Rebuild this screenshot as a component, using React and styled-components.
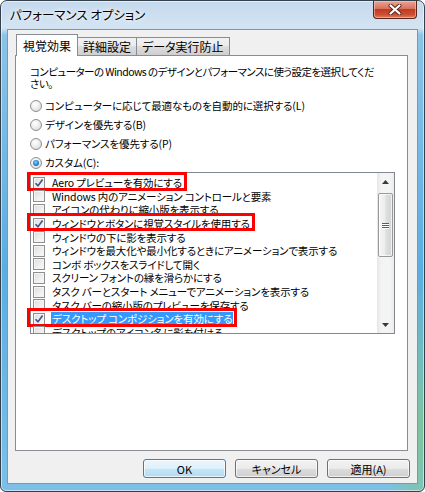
import React from 'react';
import styled, { createGlobalStyle } from 'styled-components';

const FONT = "'Noto Sans CJK JP', 'Noto Sans', sans-serif";

const GlobalStyle = createGlobalStyle`
  html, body {
    margin: 0;
    padding: 0;
    background: #ffffff;
  }
  body {
    font-family: ${FONT};
    font-feature-settings: 'palt';
    color: #000000;
  }
`;

const Window = styled.div`
  box-sizing: border-box;
  width: 425px;
  height: 492px;
  display: flex;
  flex-direction: column;
  padding: 0 6px 7px 6px;
  border: 1px solid #34404c;
  border-radius: 7px 7px 6px 6px;
  overflow: hidden;
  background:
    radial-gradient(ellipse 40px 160px at 100% 88%, rgba(130, 200, 120, 0.7), transparent),
    linear-gradient(to bottom, #c4d9ed 0, #d4e4f2 27px, #8cc3e8 34px, #5aaee2 55%, #7cc0e8 100%);
  box-shadow: inset 0 0 0 1px rgba(255, 255, 255, 0.55);
`;

const TitleBar = styled.div`
  height: 28px;
  display: flex;
  align-items: flex-start;
  justify-content: space-between;
  padding-left: 3px;
`;

const Title = styled.div`
  line-height: 28px;
  font-size: 12.5px;
  text-shadow: 0 0 6px #ffffff, 0 0 3px #ffffff;
`;

const CloseButton = styled.div`
  width: 44px;
  height: 18px;
  margin-right: 1px;
  display: flex;
  align-items: center;
  justify-content: center;
  box-sizing: border-box;
  border: 1px solid #5a2419;
  border-top: none;
  border-radius: 0 0 4px 4px;
  background: linear-gradient(to bottom, #eaa596 0, #d9715c 45%, #c23a22 50%, #cc4f34 80%, #de8262 100%);
  box-shadow: inset 0 0 0 1px rgba(255, 210, 200, 0.5);
`;

const Client = styled.div`
  flex: 1;
  display: flex;
  flex-direction: column;
  padding: 4px 9px 5px 7px;
  border: 1px solid #8196ab;
  background: #f0f0f0;
`;

const TabStrip = styled.div`
  height: 21px;
  display: flex;
  align-items: flex-end;
  padding-left: 1px;
`;

const Tab = styled.div`
  box-sizing: border-box;
  height: ${(p) => (p.$active ? '22px' : '18px')};
  margin-bottom: ${(p) => (p.$active ? '-1px' : '0')};
  margin-left: ${(p) => (p.$active ? '0' : '-1px')};
  position: relative;
  z-index: ${(p) => (p.$active ? 1 : 0)};
  padding: 0 ${(p) => (p.$active ? '6px' : '5px')};
  display: flex;
  align-items: center;
  font-size: 12px;
  border: 1px solid #898c95;
  border-bottom: none;
  background: ${(p) => (p.$active ? '#ffffff' : 'linear-gradient(to bottom, #f2f2f2, #ebebeb 50%, #dddddd 50%, #cfcfcf)')};
`;

const Panel = styled.div`
  flex: 1;
  background: #ffffff;
  border: 1px solid #898c95;
  padding: 10px 0 0 14px;
`;

const Description = styled.div`
  font-size: 10.5px;
  letter-spacing: -0.55px;
  line-height: 12px;
`;

const DescLine = styled.div`
  height: 12px;
  white-space: nowrap;
`;

const RadioGroup = styled.div`
  margin-top: 6px;
  display: flex;
  flex-direction: column;
`;

const RadioRow = styled.div`
  height: 19px;
  display: flex;
  align-items: center;
  gap: 3px;
  font-size: 10.5px;
  letter-spacing: -0.1px;
`;

const RadioCircle = styled.span`
  box-sizing: border-box;
  width: 12px;
  height: 12px;
  border-radius: 50%;
  border: 1px solid #8e8f8f;
  background: radial-gradient(circle at 40% 35%, #ffffff 0, #f0f0f0 40%, #d2d2d2 100%);
  display: flex;
  align-items: center;
  justify-content: center;

  &::after {
    content: '';
    display: ${(p) => (p.$on ? 'block' : 'none')};
    width: 6px;
    height: 6px;
    border-radius: 50%;
    background: radial-gradient(circle at 45% 40%, #8fd6ff 0, #2c8fd8 45%, #144f8c 100%);
  }
`;

const ListBox = styled.div`
  box-sizing: border-box;
  width: 365px;
  height: 162px;
  display: flex;
  border: 1px solid #828790;
  background: #ffffff;
`;

const Rows = styled.div`
  flex: 1;
  margin-top: -1px;
  padding-top: 4px;
  overflow-x: visible;
  overflow-y: clip;
`;

const Row = styled.div`
  height: 13.6px;
  display: flex;
  align-items: stretch;
  padding-left: 2px;
  font-size: 10.5px;
  letter-spacing: -0.15px;
  white-space: nowrap;
`;

const Mark = styled.div`
  position: relative;
  display: flex;
  align-items: center;
  gap: 7px;

  &::after {
    content: '';
    display: ${(p) => (p.$on ? 'block' : 'none')};
    position: absolute;
    inset: -4px -4px -1px -6px;
    border: 3px solid #ff0000;
    pointer-events: none;
  }
`;

const CheckBox = styled.span`
  box-sizing: border-box;
  flex: none;
  width: 12px;
  height: 12px;
  border: 1px solid #8e8f8f;
  background: linear-gradient(135deg, #dcdcdc 0, #f0f0f0 60%, #fbfbfb 100%);
  box-shadow: inset 0 0 0 1px #f4f4f4;
  display: flex;
  align-items: center;
  justify-content: center;
`;

const Label = styled.span`
  line-height: 13px;
  padding: 0 1px;
  margin-left: -1px;
  background: ${(p) => (p.$selected ? '#3399ff' : 'transparent')};
  color: ${(p) => (p.$selected ? '#ffffff' : '#000000')};
`;

const ScrollBar = styled.div`
  width: 17px;
  display: flex;
  flex-direction: column;
  background: linear-gradient(to right, #e6e6e6, #f4f4f4 25%, #f4f4f4 75%, #ececec);
`;

const ArrowButton = styled.div`
  height: 17px;
  display: flex;
  align-items: center;
  justify-content: center;
`;

const Track = styled.div`
  flex: 1;
  padding: 3px 1px 0 1px;
`;

const Thumb = styled.div`
  box-sizing: border-box;
  height: 64px;
  border: 1px solid #999999;
  border-radius: 2px;
  background: linear-gradient(to right, #f6f6f6, #ececec 45%, #dedede 55%, #d3d3d3);
  box-shadow: inset 0 0 0 1px rgba(255, 255, 255, 0.7);
  display: flex;
  flex-direction: column;
  align-items: center;
  justify-content: center;
  gap: 1px;
`;

const Grip = styled.span`
  width: 7px;
  height: 1px;
  background: #5a5a5a;
  box-shadow: 0 1px 0 #ffffff;
`;

const ButtonRow = styled.div`
  margin-top: 8px;
  margin-right: -2px;
  display: flex;
  justify-content: flex-end;
  gap: 9px;
`;

const Button = styled.button`
  box-sizing: border-box;
  width: 83px;
  height: 19px;
  padding: 0;
  font-family: ${FONT};
  font-feature-settings: 'palt';
  font-size: 11px;
  color: #000000;
  border: 1px solid ${(p) => (p.$default ? '#3c7fb1' : '#707070')};
  border-radius: 3px;
  background: ${(p) =>
    p.$default
      ? 'linear-gradient(to bottom, #ecf6fc, #dcf0fb 50%, #c5e6f8 50%, #b2dcf3)'
      : 'linear-gradient(to bottom, #f2f2f2, #ebebeb 50%, #dddddd 50%, #cfcfcf)'};
  box-shadow: inset 0 0 0 1px rgba(255, 255, 255, 0.7);
`;

const items = [
  { text: 'Aero プレビューを有効にする', checked: true, marked: true },
  { text: 'Windows 内のアニメーション コントロールと要素' },
  { text: 'アイコンの代わりに縮小版を表示する' },
  { text: 'ウィンドウとボタンに視覚スタイルを使用する', checked: true, marked: true },
  { text: 'ウィンドウの下に影を表示する' },
  { text: 'ウィンドウを最大化や最小化するときにアニメーションで表示する' },
  { text: 'コンボ ボックスをスライドして開く' },
  { text: 'スクリーン フォントの縁を滑らかにする' },
  { text: 'タスク バーとスタート メニューでアニメーションを表示する' },
  { text: 'タスク バーの縮小版のプレビューを保存する' },
  { text: 'デスクトップ コンポジションを有効にする', checked: true, marked: true, selected: true },
  { text: 'デスクトップのアイコン名に影を付ける' },
  { text: 'ドラッグ中にウィンドウの内容を表示する' },
];

const radios = [
  { text: 'コンピューターに応じて最適なものを自動的に選択する(L)' },
  { text: 'デザインを優先する(B)' },
  { text: 'パフォーマンスを優先する(P)' },
  { text: 'カスタム(C):', on: true },
];

const CloseIcon = () => (
  <svg width="14" height="11" viewBox="0 0 14 11">
    <path d="M2.5 1.5 L11.5 9.5 M11.5 1.5 L2.5 9.5" stroke="#5a2419" strokeWidth="4" strokeLinecap="round" />
    <path d="M2.5 1.5 L11.5 9.5 M11.5 1.5 L2.5 9.5" stroke="#ffffff" strokeWidth="2.2" strokeLinecap="round" />
  </svg>
);

const CheckMark = () => (
  <svg width="10" height="10" viewBox="0 0 10 10">
    <path d="M1.5 5.2 L4 7.8 L8.6 1.6" fill="none" stroke="#3d548c" strokeWidth="1.6" />
  </svg>
);

const Arrow = ({ down }) => (
  <svg width="7" height="4" viewBox="0 0 7 4">
    <polygon points={down ? '0,0 7,0 3.5,4' : '0,4 7,4 3.5,0'} fill="#3a3a3a" />
  </svg>
);

const App = () => (
  <>
    <GlobalStyle />
    <Window>
      <TitleBar>
        <Title>パフォーマンス オプション</Title>
        <CloseButton>
          <CloseIcon />
        </CloseButton>
      </TitleBar>
      <Client>
        <TabStrip>
          <Tab $active>視覚効果</Tab>
          <Tab>詳細設定</Tab>
          <Tab>データ実行防止</Tab>
        </TabStrip>
        <Panel>
          <Description>
            <DescLine>コンピューターの Windows のデザインとパフォーマンスに使う設定を選択してくだ</DescLine>
            <DescLine>さい。</DescLine>
          </Description>
          <RadioGroup>
            {radios.map((r) => (
              <RadioRow key={r.text}>
                <RadioCircle $on={r.on} />
                {r.text}
              </RadioRow>
            ))}
          </RadioGroup>
          <ListBox>
            <Rows>
              {items.map((it) => (
                <Row key={it.text}>
                  <Mark $on={it.marked}>
                    <CheckBox>{it.checked && <CheckMark />}</CheckBox>
                    <Label $selected={it.selected}>{it.text}</Label>
                  </Mark>
                </Row>
              ))}
            </Rows>
            <ScrollBar>
              <ArrowButton>
                <Arrow />
              </ArrowButton>
              <Track>
                <Thumb>
                  <Grip />
                  <Grip />
                  <Grip />
                </Thumb>
              </Track>
              <ArrowButton>
                <Arrow down />
              </ArrowButton>
            </ScrollBar>
          </ListBox>
        </Panel>
        <ButtonRow>
          <Button $default>OK</Button>
          <Button>キャンセル</Button>
          <Button>適用(A)</Button>
        </ButtonRow>
      </Client>
    </Window>
  </>
);

export default App;
